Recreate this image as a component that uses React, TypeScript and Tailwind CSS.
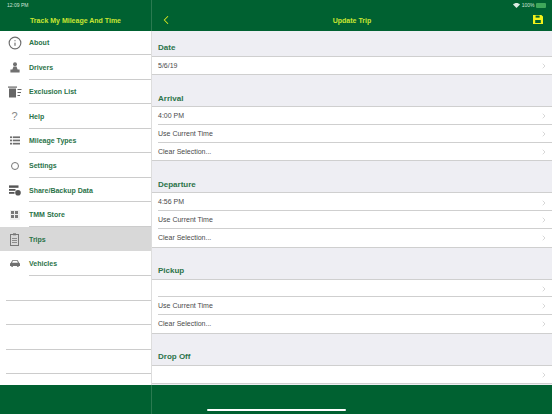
import { ChevronLeft, ChevronRight, Info } from "lucide-react";
import type { ReactNode } from "react";

const menu: { label: string; icon: ReactNode; active?: boolean }[] = [
  { label: "About", icon: <Info className="h-[14px] w-[14px]" strokeWidth={2} /> },
  { label: "Drivers", icon: <DriverIcon /> },
  { label: "Exclusion List", icon: <TrashList /> },
  { label: "Help", icon: <span className="text-[11px] leading-none text-[#888]">?</span> },
  { label: "Mileage Types", icon: <TypesIcon /> },
  { label: "Settings", icon: <span className="h-[8px] w-[8px] rounded-full border-[1.5px] border-[#777]" /> },
  { label: "Share/Backup Data", icon: <ShareData /> },
  { label: "TMM Store", icon: <StoreIcon /> },
  { label: "Trips", icon: <TripsIcon />, active: true },
  { label: "Vehicles", icon: <CarIcon /> },
];

const sections = [
  { title: "Date", rows: ["5/6/19"], first: true },
  { title: "Arrival", rows: ["4:00 PM", "Use Current Time", "Clear Selection..."] },
  { title: "Departure", rows: ["4:56 PM", "Use Current Time", "Clear Selection..."] },
  { title: "Pickup", rows: ["", "Use Current Time", "Clear Selection..."] },
  { title: "Drop Off", rows: [""] },
];

function DriverIcon() {
  return (
    <svg width="10" height="11" viewBox="0 0 10 11" fill="#707070">
      <circle cx="5" cy="2.2" r="2" />
      <path d="M3.5 4.6h3L7.6 7.6H9.6V10.6H0.4V7.6H2.4z" />
    </svg>
  );
}

function TypesIcon() {
  return (
    <svg width="10" height="9" viewBox="0 0 10 9" fill="#6e6e6e">
      <rect x="0" y="0.4" width="2" height="1.7" />
      <rect x="2.8" y="0.4" width="7.2" height="1.7" />
      <rect x="0" y="3.6" width="2" height="1.7" />
      <rect x="2.8" y="3.6" width="7.2" height="1.7" />
      <rect x="0" y="6.8" width="2" height="1.7" />
      <rect x="2.8" y="6.8" width="7.2" height="1.7" />
    </svg>
  );
}

function TrashList() {
  return (
    <svg width="14" height="12" viewBox="0 0 14 12" fill="#666">
      <rect x="0" y="0.5" width="9" height="1.2" />
      <path d="M1 2.5h7v9H1z" />
      <rect x="9.5" y="3" width="4" height="1" />
      <rect x="9.5" y="6" width="3.5" height="1" />
      <rect x="9.5" y="9" width="2.5" height="1" />
    </svg>
  );
}

function ShareData() {
  return (
    <svg width="12" height="11" viewBox="0 0 12 11" fill="#555">
      <rect x="0" y="0.4" width="9.5" height="2.4" />
      <rect x="0" y="4" width="6.5" height="1.8" />
      <rect x="0" y="7" width="5.5" height="1.8" />
      <circle cx="9" cy="7.8" r="2.8" />
    </svg>
  );
}

function StoreIcon() {
  return (
    <span className="grid h-[10px] w-[10px] grid-cols-2 gap-[1.5px] bg-[#eee] p-[1.5px]">
      <span className="bg-[#777]" />
      <span className="bg-[#777]" />
      <span className="bg-[#777]" />
      <span className="bg-[#777]" />
    </span>
  );
}

function TripsIcon() {
  return (
    <svg width="9" height="13" viewBox="0 0 9 13" fill="none" stroke="#777">
      <rect x="0.5" y="1.5" width="8" height="11" />
      <rect x="3" y="0.3" width="3" height="2" fill="#777" stroke="none" />
      <path d="M2 5.5h5M2 7.5h5M2 9.5h5" strokeWidth="0.8" />
    </svg>
  );
}

function CarIcon() {
  return (
    <svg width="10" height="7" viewBox="0 0 10 7" fill="#707070">
      <path d="M2.2 0.3h5.6L9 2.8 10 3.6V6H8.6V6.9H7.2V6H2.8V6.9H1.4V6H0V3.6L1 2.8zM2.8 1.1 2.1 2.8h5.8L7.2 1.1z" fillRule="evenodd" />
    </svg>
  );
}

function SaveIcon() {
  return (
    <svg width="10" height="9" viewBox="0 0 10 9" className="absolute right-[9px] top-[15px]">
      <path d="M0 0h8.4L10 1.6V9H0z" fill="#f2f21a" />
      <rect x="2.6" y="0.6" width="4" height="2" fill="#006131" />
      <rect x="2.2" y="5" width="5.6" height="3" fill="#006131" />
    </svg>
  );
}

function WifiIcon() {
  return (
    <svg width="7" height="5" viewBox="0 0 7 5" fill="#dcebe2">
      <path d="M0 1.6C2 -0.4 5 -0.4 7 1.6L3.5 5z" />
    </svg>
  );
}

export default function App() {
  return (
    <div className="relative flex h-[414px] w-[552px] flex-col overflow-hidden bg-white font-['Liberation_Sans',sans-serif]">
      <div className="flex h-[30.5px] shrink-0 bg-[#006131]">
        <div className="relative w-[152px] border-r border-[#2a7a50]">
          <span className="absolute left-[7px] top-[3px] text-[5px] leading-[5px] text-[#cfe3d6]">12:09 PM</span>
          <div className="pt-[15.5px] text-center text-[7px] font-bold leading-[10px] text-[#c8e632]">Track My Mileage And Time</div>
        </div>
        <div className="relative flex-1">
          <div className="absolute right-[6px] top-[3px] flex items-center gap-[1.5px] text-[5px] leading-[5px] text-[#cfe3d6]">
            <WifiIcon />
            <span>100%</span>
            <span className="h-[4.5px] w-[10px] rounded-[1px] bg-[#3fa85a]" />
          </div>
          <ChevronLeft className="absolute left-[7px] top-[13px] h-[14px] w-[14px] text-[#dcea1e]" strokeWidth={1.75} />
          <div className="pt-[15.5px] text-center text-[7px] font-bold leading-[10px] text-[#c8e632]">Update Trip</div>
          <SaveIcon />
        </div>
      </div>

      <div className="flex min-h-0 flex-1">
        <div className="w-[152px] shrink-0 border-r border-[#ddd]">
          {menu.map((item) => (
            <div key={item.label} className={`flex h-[24.55px] items-center ${item.active ? "bg-[#d8d8d8]" : ""}`}>
              <div className="flex w-[29px] shrink-0 items-center justify-center text-[#6e6e6e]">{item.icon}</div>
              <div className={`flex h-full flex-1 items-center border-b border-[#cccccc] pt-[2.5px] text-[7px] font-bold text-[#2b7349] ${item.active ? "border-transparent" : ""}`}>
                {item.label}
              </div>
            </div>
          ))}
          {[0, 1, 2, 3, 4].map((i) => (
            <div key={i} className="ml-[6px] h-[24.55px] border-b border-[#cccccc]" />
          ))}
        </div>

        <div className="min-w-0 flex-1 overflow-hidden bg-[#eeeef3]">
          {sections.map((section) => (
            <div key={section.title}>
              <div className={`flex items-end border-b border-[#cfcfcf] px-[6px] pb-[2.5px] text-[8px] font-bold leading-[10px] text-[#2b7349] ${section.first ? "h-[26.2px]" : "h-[32px]"}`}>
                {section.title}
              </div>
              <div className="border-b border-[#cfcfcf] bg-white">
                {section.rows.map((row, i) => (
                  <div key={i} className="flex h-[17.7px] items-center pl-[6px]">
                    <div className={`flex h-full flex-1 items-center justify-between pr-[4px] pt-[1.5px] text-[7px] text-[#4a4a4a] ${i < section.rows.length - 1 ? "border-b border-[#cfcfcf]" : ""}`}>
                      <span>{row}</span>
                      <ChevronRight className="h-[8px] w-[8px] text-[#c4c4c4]" />
                    </div>
                  </div>
                ))}
              </div>
            </div>
          ))}
        </div>
      </div>

      <div className="relative flex h-[29px] shrink-0 bg-[#006131]">
        <div className="w-[152px] border-r border-[#2a7a50]" />
        <span className="absolute bottom-[3px] left-[207px] h-[2px] w-[139px] rounded-full bg-white" />
      </div>
    </div>
  );
}
